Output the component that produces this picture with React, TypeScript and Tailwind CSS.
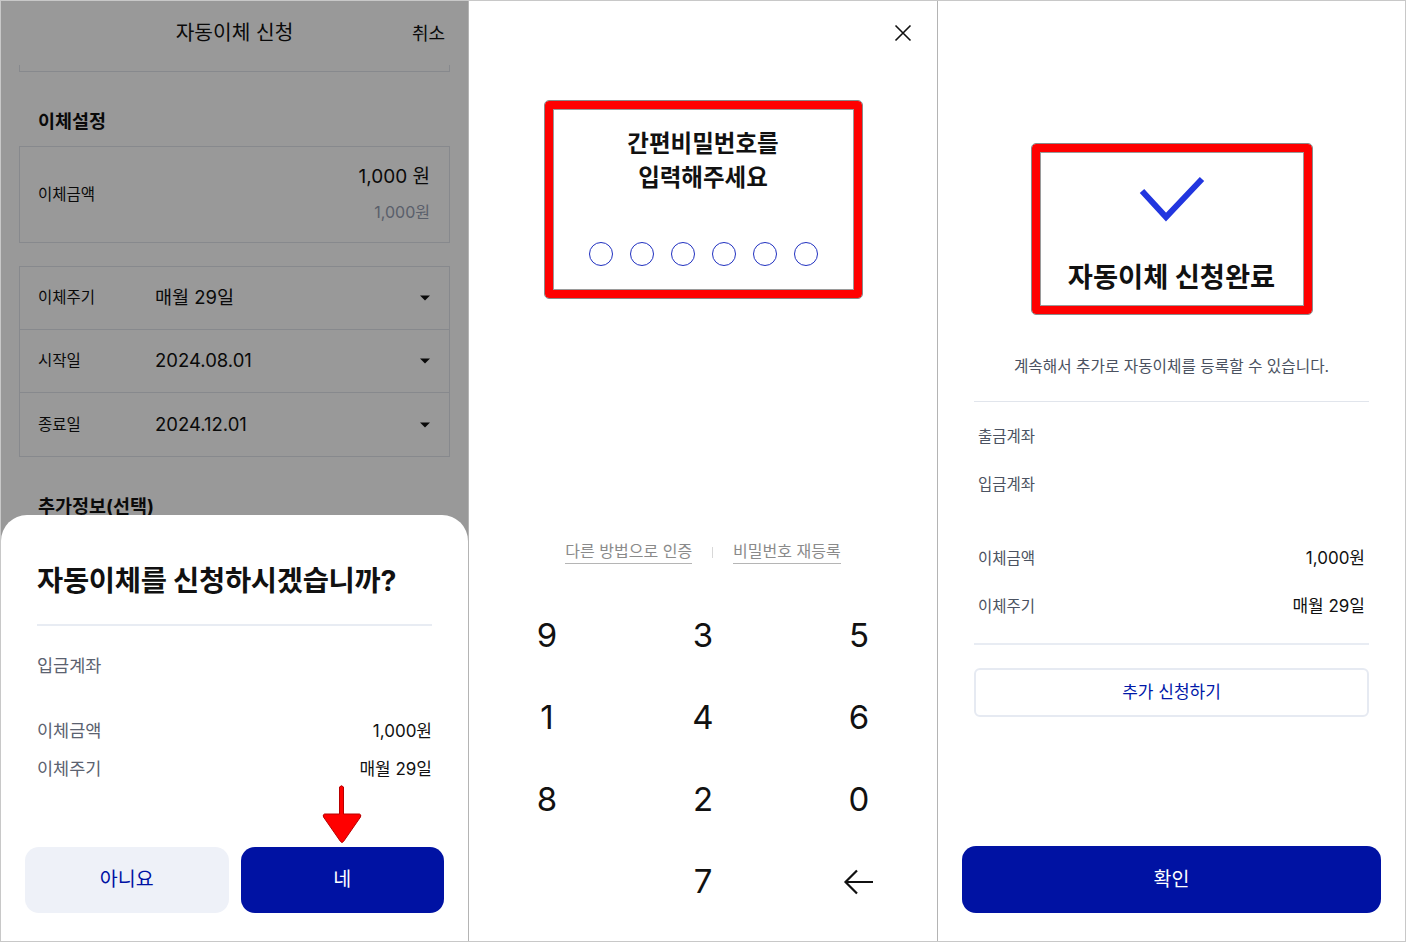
import React from 'react';

const font = "font-['Inter','Noto_Sans_CJK_KR',sans-serif]";

const Caret = () => (
    <svg width="12" height="8" viewBox="0 0 12 8" className="shrink-0">
        <path d="M1 1.5h10L6 6.5z" fill="#111" />
    </svg>
);

const RedArrow = () => (
    <svg width="44" height="62" viewBox="0 0 44 62" className="absolute left-[319px] top-[269px]">
        <path d="M19.5 3 Q21.5 0.5 23.5 3 L23.5 30 L39.5 30 Q41.5 30.5 40.5 33 L23.5 57.5 Q22 59.5 20.5 57.5 L3.5 33 Q2.5 30.5 4.5 30 L19.5 30 Z" fill="#ff0000" stroke="#b80000" strokeWidth="1" strokeLinejoin="round" />
    </svg>
);

const SelectRow = ({ label, value, last }: { label: string; value: string; last?: boolean }) => (
    <div className={`flex items-center h-[63px] pl-[18px] pr-[18px] ${last ? '' : 'border-b border-[#e1e5ec]'}`}>
        <span className="w-[117px] text-[15.5px] text-[#111]">{label}</span>
        <span className="flex-1 text-[18.5px] text-[#111]">{value}</span>
        <Caret />
    </div>
);

// 왼쪽: 자동이체 신청 + 확인 바텀시트
const ApplyPanel = () => (
    <div className="relative w-[467px] h-full overflow-hidden bg-white">
        <div className="grid grid-cols-[1fr_auto_1fr] items-center h-[64px]">
            <span />
            <span className="text-[20.3px] text-[#111]">자동이체 신청</span>
            <span className="justify-self-end pr-[23px] text-[18px] text-[#111]">취소</span>
        </div>
        <div className="mx-[18px] h-[7px] border-x border-b border-[#e1e5ec]" />
        <h2 className="mt-[36px] pl-[37px] text-[18.5px] leading-[26px] font-bold text-[#111]">이체설정</h2>
        <div className="mx-[18px] mt-[12px] h-[97px] border border-[#e1e5ec] flex items-center justify-between pl-[18px] pr-[19px]">
            <span className="text-[15.5px] text-[#111]">이체금액</span>
            <div className="flex flex-col items-end">
                <span className="text-[19px] leading-[26px] text-[#111] -mt-[3px]">1,000 원</span>
                <span className="mt-[11px] text-[16px] leading-[22px] text-[#969eb2]">1,000원</span>
            </div>
        </div>
        <div className="mx-[18px] mt-[23px] border border-[#e1e5ec]">
            <SelectRow label="이체주기" value="매월 29일" />
            <SelectRow label="시작일" value="2024.08.01" />
            <SelectRow label="종료일" value="2024.12.01" last />
        </div>
        <h2 className="mt-[36px] pl-[37px] text-[18.5px] leading-[26px] font-bold text-[#111]">추가정보(선택)</h2>

        <div className="absolute inset-0 bg-black/40" />

        <div className="absolute left-0 right-0 bottom-0 h-[426px] bg-white rounded-t-[26px] flex flex-col">
            <h3 className="pt-[47px] pl-[36px] text-[28.5px] leading-[38px] font-bold text-[#111] tracking-[-0.3px]">자동이체를 신청하시겠습니까?</h3>
            <div className="mx-[36px] mt-[24px] h-[2px] bg-[#e8ecf3]" />
            <div className="mt-[28px] px-[36px] text-[17.5px] leading-[24px] text-[#5b6270]">입금계좌</div>
            <div className="mt-[41px] px-[36px] flex justify-between text-[17.5px] leading-[24px]">
                <span className="text-[#5b6270]">이체금액</span>
                <span className="text-[#111] text-[17px]">1,000원</span>
            </div>
            <div className="mt-[14px] px-[36px] flex justify-between text-[17.5px] leading-[24px]">
                <span className="text-[#5b6270]">이체주기</span>
                <span className="text-[#111] text-[17px]">매월 29일</span>
            </div>
            <div className="mt-auto mb-[28px] mx-[24px] flex gap-[12px]">
                <button className="flex-1 h-[66px] rounded-[14px] bg-[#eef1f8] text-[19.5px] text-[#0012a3]">아니요</button>
                <button className="flex-1 h-[66px] rounded-[14px] bg-[#0012a3] text-[19.5px] text-white">네</button>
            </div>
            <RedArrow />
        </div>
    </div>
);

// 가운데: 간편비밀번호 입력
const PinPanel = () => {
    const keys = ['9', '3', '5', '1', '4', '6', '8', '2', '0', '', '7', 'back'];
    return (
        <div className="w-[468px] h-full bg-white flex flex-col">
            <div className="h-[64px] flex items-center justify-end pr-[25px]">
                <svg width="18" height="18" viewBox="0 0 18 18">
                    <path d="M1.5 1.5l15 15M16.5 1.5l-15 15" stroke="#111" strokeWidth="1.6" />
                </svg>
            </div>
            <div className="self-center mt-[36px] w-[317px] h-[197px] rounded-[4px] border-[8px] border-[#ff0000] outline outline-1 outline-[#8a8a8a]">
                <div className="h-full border border-[#9a9a9a] flex flex-col items-center">
                    <p className="mt-[17px] text-center text-[23.5px] leading-[34px] font-bold text-[#111]">
                        간편비밀번호를<br />입력해주세요
                    </p>
                    <div className="mt-[47px] flex gap-[17px]">
                        {Array.from({ length: 6 }).map((_, i) => (
                            <span key={i} className="w-[24px] h-[24px] rounded-full border-[1.5px] border-[#2030c0]" />
                        ))}
                    </div>
                </div>
            </div>
            <div className="mt-[242px] flex items-center justify-center gap-[20px] text-[16px] leading-[22px] text-[#8a8a8a]">
                <span className="border-b border-[#b5b5b5] pb-[1px]">다른 방법으로 인증</span>
                <span className="w-px h-[11px] bg-[#d8d8d8]" />
                <span className="border-b border-[#b5b5b5] pb-[1px]">비밀번호 재등록</span>
            </div>
            <div className="mt-[31px] grid grid-cols-3">
                {keys.map((k, i) => (
                    <div key={i} className="h-[82px] flex items-center justify-center text-[33px] text-[#111]">
                        {k === 'back' ? (
                            <svg width="32" height="28" viewBox="0 0 32 28">
                                <path d="M30 14H3M14 2.5L2.5 14L14 25.5" fill="none" stroke="#111" strokeWidth="2.2" />
                            </svg>
                        ) : k}
                    </div>
                ))}
            </div>
        </div>
    );
};

// 오른쪽: 신청완료
const DonePanel = () => (
    <div className="w-[467px] h-full bg-white flex flex-col">
        <div className="self-center mt-[143px] w-[280px] h-[170px] rounded-[4px] border-[8px] border-[#ff0000] outline outline-1 outline-[#8a8a8a]">
            <div className="h-full border border-[#9a9a9a] flex flex-col items-center">
                <svg width="66" height="48" viewBox="0 0 66 48" className="mt-[22px]">
                    <path d="M3 16L27 42L63 4" fill="none" stroke="#2236df" strokeWidth="6" />
                </svg>
                <p className="mt-[37px] text-[27.3px] leading-[36px] font-bold text-[#111]">자동이체 신청완료</p>
            </div>
        </div>
        <p className="mt-[42px] text-center text-[15.7px] leading-[22px] text-[#4b5261]">계속해서 추가로 자동이체를 등록할 수 있습니다.</p>
        <div className="mx-[36px] mt-[23px] h-px bg-[#e1e5ec]" />
        <div className="mt-[24px] px-[40px] text-[15.5px] leading-[22px] text-[#4b5261]">출금계좌</div>
        <div className="mt-[26px] px-[40px] text-[15.5px] leading-[22px] text-[#4b5261]">입금계좌</div>
        <div className="mt-[50px] pl-[40px] pr-[40px] flex items-center justify-between h-[26px]">
            <span className="text-[15.5px] text-[#4b5261]">이체금액</span>
            <span className="text-[17px] text-[#111]">1,000원</span>
        </div>
        <div className="mt-[22px] pl-[40px] pr-[40px] flex items-center justify-between h-[26px]">
            <span className="text-[15.5px] text-[#4b5261]">이체주기</span>
            <span className="text-[17px] text-[#111]">매월 29일</span>
        </div>
        <div className="mx-[36px] mt-[23px] h-[2px] bg-[#e8ecf3]" />
        <button className="mx-[36px] mt-[23px] h-[49px] rounded-[6px] border-2 border-[#e6eaf2] text-[17px] text-[#0018a8]">추가 신청하기</button>
        <button className="mt-auto mb-[28px] mx-[24px] h-[67px] rounded-[14px] bg-[#0012a3] text-[19.5px] text-white">확인</button>
    </div>
);

export default function App() {
    return (
        <div className={`${font} w-[1406px] h-[942px] flex border border-[#c8c8c8] bg-white`}>
            <ApplyPanel />
            <div className="w-px bg-[#b4b4b4]" />
            <PinPanel />
            <div className="w-px bg-[#b4b4b4]" />
            <DonePanel />
        </div>
    );
}
